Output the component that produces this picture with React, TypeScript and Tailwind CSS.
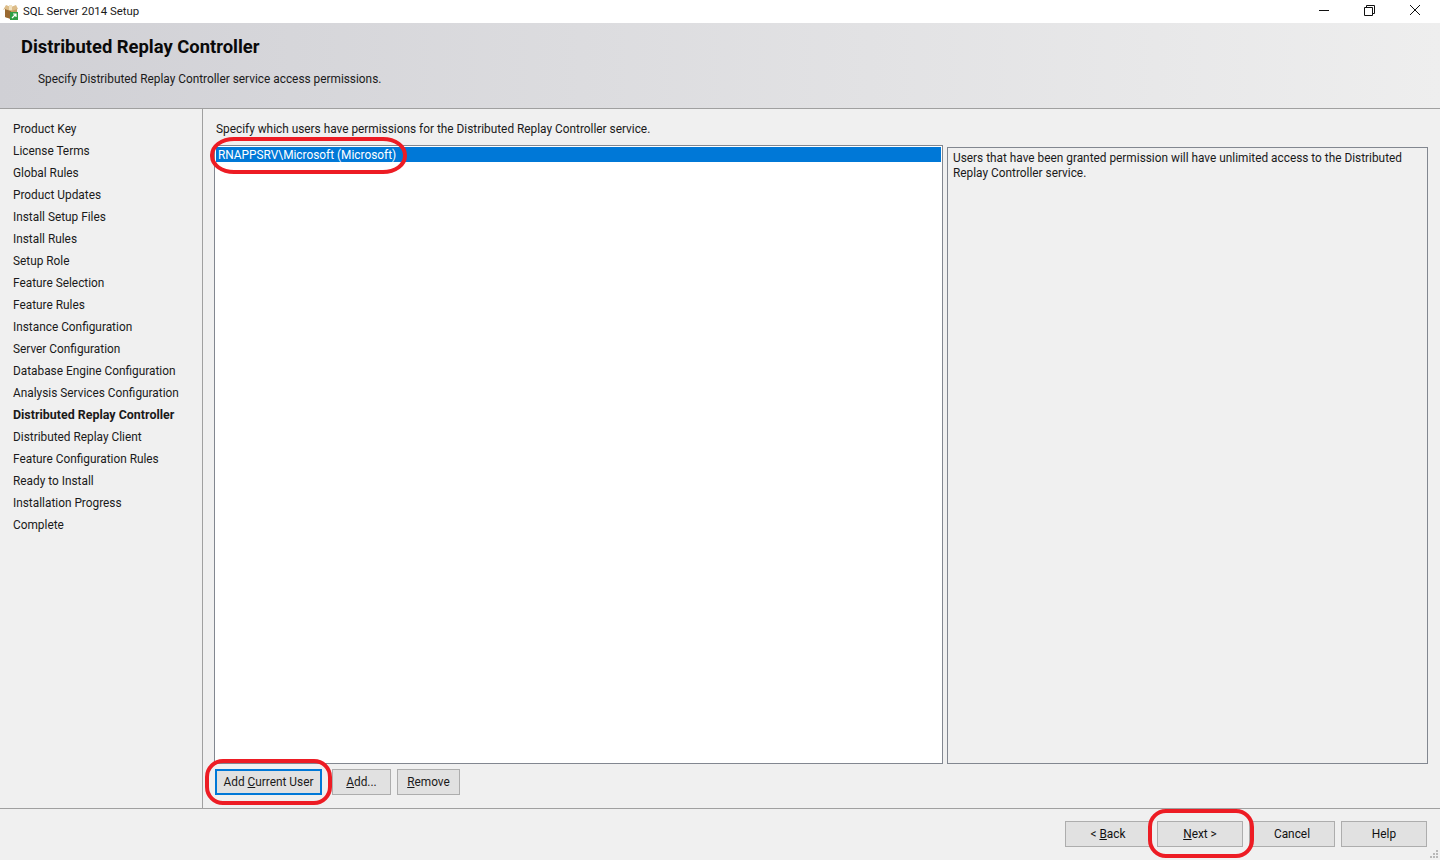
import React from "react";

const steps = [
  "Product Key",
  "License Terms",
  "Global Rules",
  "Product Updates",
  "Install Setup Files",
  "Install Rules",
  "Setup Role",
  "Feature Selection",
  "Feature Rules",
  "Instance Configuration",
  "Server Configuration",
  "Database Engine Configuration",
  "Analysis Services Configuration",
  "Distributed Replay Controller",
  "Distributed Replay Client",
  "Feature Configuration Rules",
  "Ready to Install",
  "Installation Progress",
  "Complete",
];

const BoxIcon = () => (
  <svg width="16" height="16" viewBox="0 0 16 16" className="shrink-0">
    <path d="M2 5 L8 3 L14 5 L14 13 L8 15 L2 13 Z" fill="#c39a5e" />
    <path d="M2 5 L8 7 L8 15 L2 13 Z" fill="#9a6a32" />
    <path d="M0 6 L3 1 L8 3 L13 1 L15 5 L8 7 L2 5 Z" fill="#dcbc88" />
    <path d="M6 1 L9 1 L9 6 L6 6 Z" fill="#f2e2c0" />
    <rect x="7" y="8" width="8" height="8" fill="#2f9e44" />
    <path d="M9 14 L13 10 M10 10 L13 10 L13 13" stroke="#ffffff" strokeWidth="1.2" fill="none" />
  </svg>
);

const FooterButton = ({ children }: { children: React.ReactNode }) => (
  <button className="w-[86px] h-[26px] pt-[2px] bg-[#e1e1e1] border border-[#adadad] text-[#111]">
    {children}
  </button>
);

const App = () => {
  return (
    <div
      className="relative w-[1440px] h-[860px] overflow-hidden flex flex-col bg-[#f0f0f0] text-[11.85px] text-[#1a1a1a]"
      style={{ fontFamily: 'Roboto, "Noto Sans", sans-serif' }}
    >
      {/* title bar */}
      <div className="h-[23px] bg-white flex items-center pl-[3px] shrink-0">
        <BoxIcon />
        <span className="ml-[4px] pt-[1px] text-[11.4px]">SQL Server 2014 Setup</span>
        <div className="ml-auto flex items-center h-full">
          <svg width="46" height="20" viewBox="0 0 46 20" className="mb-[3px]">
            <path d="M19 10.5 H29" stroke="#111" strokeWidth="1" />
          </svg>
          <svg width="46" height="20" viewBox="0 0 46 20" className="mb-[3px]">
            <path d="M18.5 7.5 H26.5 V15.5 H18.5 Z M20.5 7.5 V5.5 H28.5 V13.5 H26.5" stroke="#111" strokeWidth="1" fill="none" />
          </svg>
          <svg width="46" height="20" viewBox="0 0 46 20" className="mb-[3px] mr-[2px]">
            <path d="M18 5 L28 15 M28 5 L18 15" stroke="#111" strokeWidth="1" />
          </svg>
        </div>
      </div>

      {/* page header */}
      <div className="h-[86px] shrink-0 border-b border-[#a0a0a0] bg-gradient-to-r from-[#d0d0d5] to-[#eeeeee] pl-[21px] pt-[12px]">
        <div className="text-[18.4px] leading-[24px] font-bold text-[#0a0a0a]">Distributed Replay Controller</div>
        <div className="ml-[17px] mt-[12px] leading-[16px]">Specify Distributed Replay Controller service access permissions.</div>
      </div>

      {/* body */}
      <div className="flex-1 flex min-h-0">
        <div className="w-[203px] shrink-0 border-r border-[#a0a0a0] pt-[9px] pl-[13px]">
          {steps.map((step) => (
            <div
              key={step}
              className={`h-[22px] leading-[22px] whitespace-nowrap ${
                step === "Distributed Replay Controller" ? "font-bold text-[12.45px]" : ""
              }`}
            >
              {step}
            </div>
          ))}
        </div>

        <div className="flex-1 pl-[11px] pr-[12px] flex flex-col min-w-0">
          <div className="h-[36px] pl-[2px] pt-[12px] leading-[16px] shrink-0">
            Specify which users have permissions for the Distributed Replay Controller service.
          </div>
          <div className="flex-1 flex min-h-0 gap-[4px]">
            <div className="w-[729px] shrink-0 bg-white border border-[#828790] px-[1px] pt-[1px]">
              <div className="h-[15px] bg-[#0078d7] text-white leading-[17px] pl-[2px]">
                RNAPPSRV\Microsoft (Microsoft)
              </div>
            </div>
            <div className="w-[481px] shrink-0 mt-[2px] border border-[#828790] pl-[5px] pt-[3px] leading-[15px]">
              Users that have been granted permission will have unlimited access to the Distributed
              <br />
              Replay Controller service.
            </div>
          </div>
          <div className="h-[44px] shrink-0 flex items-start pt-[5px] pl-[1px]">
            <button className="w-[107px] h-[26px] pt-[2px] bg-[#e1e1e1] border-2 border-[#0078d7]">
              Add <u>C</u>urrent User
            </button>
            <button className="ml-[10px] w-[59px] h-[26px] pt-[2px] bg-[#e1e1e1] border border-[#adadad]">
              <u>A</u>dd...
            </button>
            <button className="ml-[6px] w-[63px] h-[26px] pt-[2px] bg-[#e1e1e1] border border-[#adadad]">
              <u>R</u>emove
            </button>
          </div>
        </div>
      </div>

      {/* footer */}
      <div className="h-[52px] shrink-0 border-t border-[#a0a0a0] flex items-start justify-end gap-[6px] pt-[12px] pr-[13px]">
        <FooterButton>
          &lt; <u>B</u>ack
        </FooterButton>
        <FooterButton>
          <u>N</u>ext &gt;
        </FooterButton>
        <FooterButton>Cancel</FooterButton>
        <FooterButton>Help</FooterButton>
      </div>

      {/* resize grip */}
      <svg width="9" height="9" viewBox="0 0 9 9" className="absolute right-[1px] bottom-[1px]">
        <path d="M6 0h2v2H6z M3 3h2v2H3z M6 3h2v2H6z M0 6h2v2H0z M3 6h2v2H3z M6 6h2v2H6z" fill="#b8b8b8" />
      </svg>

      {/* red annotation rings */}
      <div className="absolute left-[210px] top-[137px] w-[197px] h-[37px] border-[4px] border-[#ed1c24] rounded-[24px/18px]" />
      <div className="absolute left-[205px] top-[759px] w-[127px] h-[46px] border-[4px] border-[#ed1c24] rounded-[18px]" />
      <div className="absolute left-[1148px] top-[809px] w-[106px] h-[49px] border-[4px] border-[#ed1c24] rounded-[18px]" />
    </div>
  );
};

export default App;
